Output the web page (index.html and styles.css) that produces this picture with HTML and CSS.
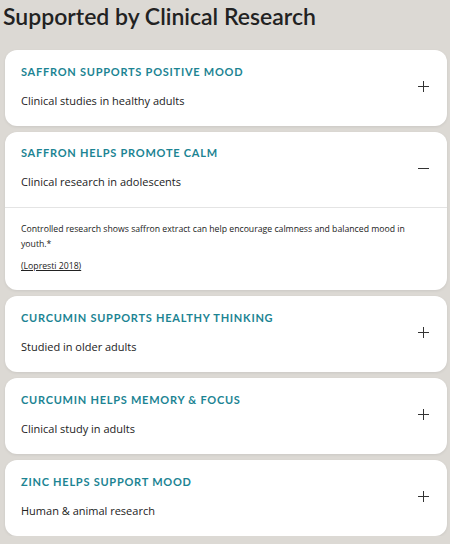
FILE: index.html
```html
<!DOCTYPE html>
<html lang="en">
<head>
  <meta charset="UTF-8">
  <meta name="viewport" content="width=device-width, initial-scale=1.0">
  <title>Supported by Clinical Research</title>
  <link rel="stylesheet" href="styles.css">
</head>
<body>
  <h1 class="heading">Supported by Clinical Research</h1>

  <div class="accordion">
    <div class="item">
      <div class="item-head">
        <div class="item-text">
          <h3 class="item-title">Saffron Supports Positive Mood</h3>
          <p class="item-sub">Clinical studies in healthy adults</p>
        </div>
        <span class="toggle plus"></span>
      </div>
    </div>

    <div class="item open">
      <div class="item-head">
        <div class="item-text">
          <h3 class="item-title">Saffron Helps Promote Calm</h3>
          <p class="item-sub">Clinical research in adolescents</p>
        </div>
        <span class="toggle minus"></span>
      </div>
      <div class="item-body">
        <p>Controlled research shows saffron extract can help encourage calmness and balanced mood in youth.*</p>
        <a href="#" class="ref">(Lopresti 2018)</a>
      </div>
    </div>

    <div class="item">
      <div class="item-head">
        <div class="item-text">
          <h3 class="item-title">Curcumin Supports Healthy Thinking</h3>
          <p class="item-sub">Studied in older adults</p>
        </div>
        <span class="toggle plus"></span>
      </div>
    </div>

    <div class="item">
      <div class="item-head">
        <div class="item-text">
          <h3 class="item-title">Curcumin Helps Memory &amp; Focus</h3>
          <p class="item-sub">Clinical study in adults</p>
        </div>
        <span class="toggle plus"></span>
      </div>
    </div>

    <div class="item">
      <div class="item-head">
        <div class="item-text">
          <h3 class="item-title">Zinc Helps Support Mood</h3>
          <p class="item-sub">Human &amp; animal research</p>
        </div>
        <span class="toggle plus"></span>
      </div>
    </div>
  </div>
</body>
</html>
```

FILE: styles.css
```css
* {
  box-sizing: border-box;
}
body {
  margin: 0;
  padding: 0 3px 0 5px;
  background: #dcd9d4;
  font-family: 'Open Sans', sans-serif;
  color: #222;
}
.heading {
  margin: 0 0 0 -2px;
  padding-top: 2px;
  font-family: Lato, sans-serif;
  font-size: 23px;
  font-weight: 600;
  line-height: 28px;
  color: #222;
}
.accordion {
  display: flex;
  flex-direction: column;
  gap: 6px;
  margin-top: 20px;
}
.item {
  background: #fff;
  border-radius: 12px;
  box-shadow: 0 1px 3px rgba(0,0,0,0.08);
}
.item-head {
  display: flex;
  align-items: center;
  justify-content: space-between;
  padding: 15px 18px 18px 16px;
  height: 76px;
}
.item.open .item-head {
  border-bottom: 1px solid #e4e4e4;
}
.item-title {
  margin: 0;
  font-family: Lato, sans-serif;
  font-size: 11px;
  font-weight: 700;
  letter-spacing: 0.75px;
  line-height: 14px;
  text-transform: uppercase;
  color: #1c8493;
}
.item-sub {
  margin: 14px 0 0;
  font-size: 11px;
  line-height: 16px;
  color: #222;
}
.toggle {
  position: relative;
  width: 11px;
  height: 11px;
}
.toggle::before,
.toggle::after {
  content: '';
  position: absolute;
  background: #333;
}
.toggle::before {
  left: 0;
  right: 0;
  top: 5px;
  height: 1px;
}
.plus::after {
  top: 0;
  bottom: 0;
  left: 5px;
  width: 1px;
}
.item-body {
  padding: 14px 30px 16px 16px;
  font-size: 8.7px;
  line-height: 15px;
}
.item-body p {
  margin: 0 0 7px;
}
.ref {
  color: #222;
  text-decoration: underline;
}
```
